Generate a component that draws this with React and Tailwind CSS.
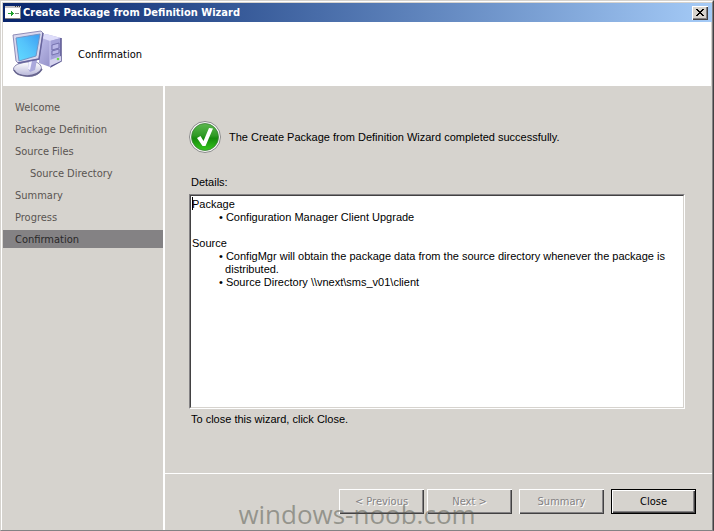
import { useId } from "react";

const steps = [
  { label: "Welcome" },
  { label: "Package Definition" },
  { label: "Source Files" },
  { label: "Source Directory", nested: true },
  { label: "Summary" },
  { label: "Progress" },
  { label: "Confirmation", current: true },
];

const details = [
  "Package",
  "\t• Configuration Manager Client Upgrade",
  "",
  "Source",
  "\t• ConfigMgr will obtain the package data from the source directory whenever the package is",
  "\t  distributed.",
  "\t• Source Directory \\\\vnext\\sms_v01\\client",
].join("\n");

function WizardIcon() {
  return (
    <svg width="16" height="13" viewBox="0 0 16 13" aria-hidden="true" shapeRendering="crispEdges">
      <rect width="16" height="13" fill="#fff" />
      <rect width="16" height="2" fill="#c6c3c6" />
      <path d="M10 1h1M12 1h1M14 1h1" stroke="#424142" transform="translate(0 -.5)" />
      <path d="M0 12.500h16M15.500 2v11" stroke="#848284" />
      <path d="M3 7h3V5h1v1h1v1h1v1h-1v1h-1v1h-1V8H3z" fill="#20a030" />
      <path d="M10 7.500h4" stroke="#848284" />
    </svg>
  );
}

function ComputerIcon() {
  return (
    <svg width="50" height="50" viewBox="0 0 50 50" aria-hidden="true">
      <defs>
        <linearGradient id="screen" x1="0" y1="1" x2="1" y2="0">
          <stop offset="0" stopColor="#62dcff" />
          <stop offset=".5" stopColor="#55c3fb" />
          <stop offset="1" stopColor="#3b9cf2" />
        </linearGradient>
        <linearGradient id="tower" x1="0" y1="0" x2="1" y2="1">
          <stop offset="0" stopColor="#c3c2ee" />
          <stop offset="1" stopColor="#8582bd" />
        </linearGradient>
        <linearGradient id="foot" x1="0" y1="0" x2="0" y2="1">
          <stop offset="0" stopColor="#ffffff" />
          <stop offset="1" stopColor="#b4b3d8" />
        </linearGradient>
      </defs>
      <path d="M27 8l7-3 15 4v23l-11 6-11-4z" fill="url(#tower)" />
      <path d="M27 8l7-3 15 4-11 3z" fill="#deddfa" />
      <path d="M38 12l11-3v23l-11 6z" fill="#a3a1d8" />
      <path d="M49 9v23l-11 6" fill="none" stroke="#59568f" strokeWidth="1.500" />
      <path d="M38 12v26" stroke="#c9c7f0" />
      <path d="M40 16l7-2v5l-7 2zM40 22l7-2v4l-7 2z" fill="#bab8e8" stroke="#7673b0" />
      <path d="M38 31l11-4v5l-11 5z" fill="#d4d2ee" />
      <circle cx="46" cy="30" r="1.300" fill="#6dd64c" />
      <path d="M14 33l-8 2c-6 3-6 7 0 10 8 4 18 3 22-2 3-4 1-8-4-10z" fill="url(#foot)" stroke="#8987b0" />
      <path d="M2 41c3 7 22 9 28-1" fill="none" stroke="#68668f" strokeWidth="1.500" />
      <path d="M17 31h8l-2 10-5 2-2-3z" fill="#aaa8dc" />
      <path d="M17 32l-1 8 2 1 2-9z" fill="#f2f1ff" />
      <path d="M1 6L29 2l2 2-4 26-21 4-2-2z" fill="#d9d7ee" stroke="#8f8db8" />
      <path d="M31 4l-4 26-21 4" fill="none" stroke="#68659e" strokeWidth="1.500" />
      <path d="M4 9l24-4-4 22-17 5z" fill="url(#screen)" stroke="#6f95c8" />
    </svg>
  );
}

function SuccessIcon() {
  return (
    <svg width="32" height="32" viewBox="0 0 32 32" aria-hidden="true">
      <defs>
        <linearGradient id="ball" x1="0" y1="0" x2="0" y2="1">
          <stop offset="0" stopColor="#5cb84f" />
          <stop offset=".45" stopColor="#2f9a25" />
          <stop offset=".55" stopColor="#158a0c" />
          <stop offset="1" stopColor="#35c81c" />
        </linearGradient>
      </defs>
      <circle cx="16" cy="16" r="15.500" fill="#f8f8f8" stroke="#8a8a8a" />
      <circle cx="16" cy="16" r="13.500" fill="url(#ball)" stroke="#3f7f3a" strokeWidth=".8" />
      <path d="M8 17l3.500-2 3 5L20 7l4 .5-7.500 17.500h-3z" fill="#fff" />
    </svg>
  );
}

function WizardButton({ children, primary = false }) {
  return (
    <button
      type="button"
      disabled={!primary}
      className={
        primary
          ? "h-[25px] w-[85px] border border-black bg-[#d6d3ce] text-black shadow-[inset_1px_1px_#fff,inset_-1px_-1px_#424142,inset_-2px_-2px_#848284]"
          : "h-[25px] w-[85px] bg-[#d6d3ce] text-[#848284] [text-shadow:1px_1px_#fff] shadow-[inset_1px_1px_#fff,inset_-1px_-1px_#424142,inset_-2px_-2px_#848284]"
      }
    >
      {children}
    </button>
  );
}

export default function App() {
  const detailsId = useId();
  return (
    <div className="relative flex h-screen flex-col border-t border-l border-[#d6d3ce] border-r border-b border-r-[#424142] border-b-[#848284] bg-[#d6d3ce] font-['DejaVu_Sans_Condensed','DejaVu_Sans',sans-serif] text-[11px] leading-[13px] text-black">
      <div className="flex min-h-0 flex-1 flex-col border-t border-r border-l border-t-white border-r-[#848284] border-l-white pt-px pl-px">
        <header className="flex h-[19px] shrink-0 items-center gap-[2px] bg-linear-to-r from-[#08246b] to-[#a5cbf7] pr-1 pl-[2px]">
          <WizardIcon />
          <h1 className="flex-1 text-[11px] font-bold text-white">Create Package from Definition Wizard</h1>
          <button
            type="button"
            aria-label="Close window"
            className="flex h-[14px] w-4 items-center justify-center bg-[#d6d3ce] shadow-[inset_1px_1px_#fff,inset_-1px_-1px_#424142,inset_-2px_-2px_#848284]"
          >
            <svg width="8" height="7" viewBox="0 0 8 7" shapeRendering="crispEdges" aria-hidden="true">
              <path d="M0 0h2v1h1v1h2V1h1V0h2v1H7v1H6v1H5v1h1v1h1v1h1v1H6V6H5V5H3v1H2v1H0V6h1V5h1V4h1V3H2V2H1V1H0z" />
            </svg>
          </button>
        </header>
        <div className="mr-px flex h-16 shrink-0 items-center gap-4 bg-white pl-[9px]">
          <ComputerIcon />
          <h2>Confirmation</h2>
        </div>
        <div className="flex min-h-0 flex-1">
          <nav aria-label="Wizard steps" className="w-[162px] shrink-0 border-r-2 border-white pt-[10px]">
            <ol>
              {steps.map((step) => (
                <li
                  key={step.label}
                  aria-current={step.current ? "step" : undefined}
                  className={
                    step.current
                      ? "mt-[2px] flex h-[18px] items-center bg-[#848284] pl-3 text-[#292829]"
                      : step.nested
                        ? "flex h-[22px] items-center pl-[27px] text-[#5a5552]"
                        : "flex h-[22px] items-center pl-3 text-[#5a5552]"
                  }
                >
                  {step.label}
                </li>
              ))}
            </ol>
          </nav>
          <div className="flex min-w-0 flex-1 flex-col">
            <main className="flex min-h-0 flex-1 flex-col pr-[27px] pl-6 pt-[35px] pb-[47px] font-['Liberation_Sans',Arial,sans-serif]">
              <div className="flex items-center gap-2">
                <SuccessIcon />
                <p>The Create Package from Definition Wizard completed successfully.</p>
              </div>
              <label htmlFor={detailsId} className="mt-[23px] ml-[2px]">
                Details:
              </label>
              <div className="relative mt-[5px] flex min-h-0 flex-1 border border-t-[#848284] border-r-white border-b-white border-l-[#848284]">
                <textarea
                  id={detailsId}
                  readOnly
                  defaultValue={details}
                  className="block w-full resize-none overflow-hidden border border-t-[#424142] border-r-[#d6d3ce] border-b-[#d6d3ce] border-l-[#424142] bg-white pt-[2px] pl-px leading-[13px] outline-none [tab-size:27px]"
                />
                <span aria-hidden="true" className="absolute top-[2px] left-[2px] h-[13px] w-px bg-black" />
              </div>
              <p className="mt-1 ml-[2px]">To close this wizard, click Close.</p>
            </main>
            <footer className="flex h-[57px] shrink-0 items-start justify-end border-t border-white pt-[15px] pr-4">
              <div className="flex gap-[3px]">
                <WizardButton>&lt; Previous</WizardButton>
                <WizardButton>Next &gt;</WizardButton>
              </div>
              <div className="ml-[7px] flex gap-[7px]">
                <WizardButton>Summary</WizardButton>
                <WizardButton primary>Close</WizardButton>
              </div>
            </footer>
          </div>
        </div>
      </div>
      <p className="pointer-events-none absolute right-0 bottom-0 left-0 text-center font-['Open_Sans',sans-serif] text-[26px] leading-[32px] text-[#52554a]/50">
        windows-noob.com
      </p>
    </div>
  );
}
